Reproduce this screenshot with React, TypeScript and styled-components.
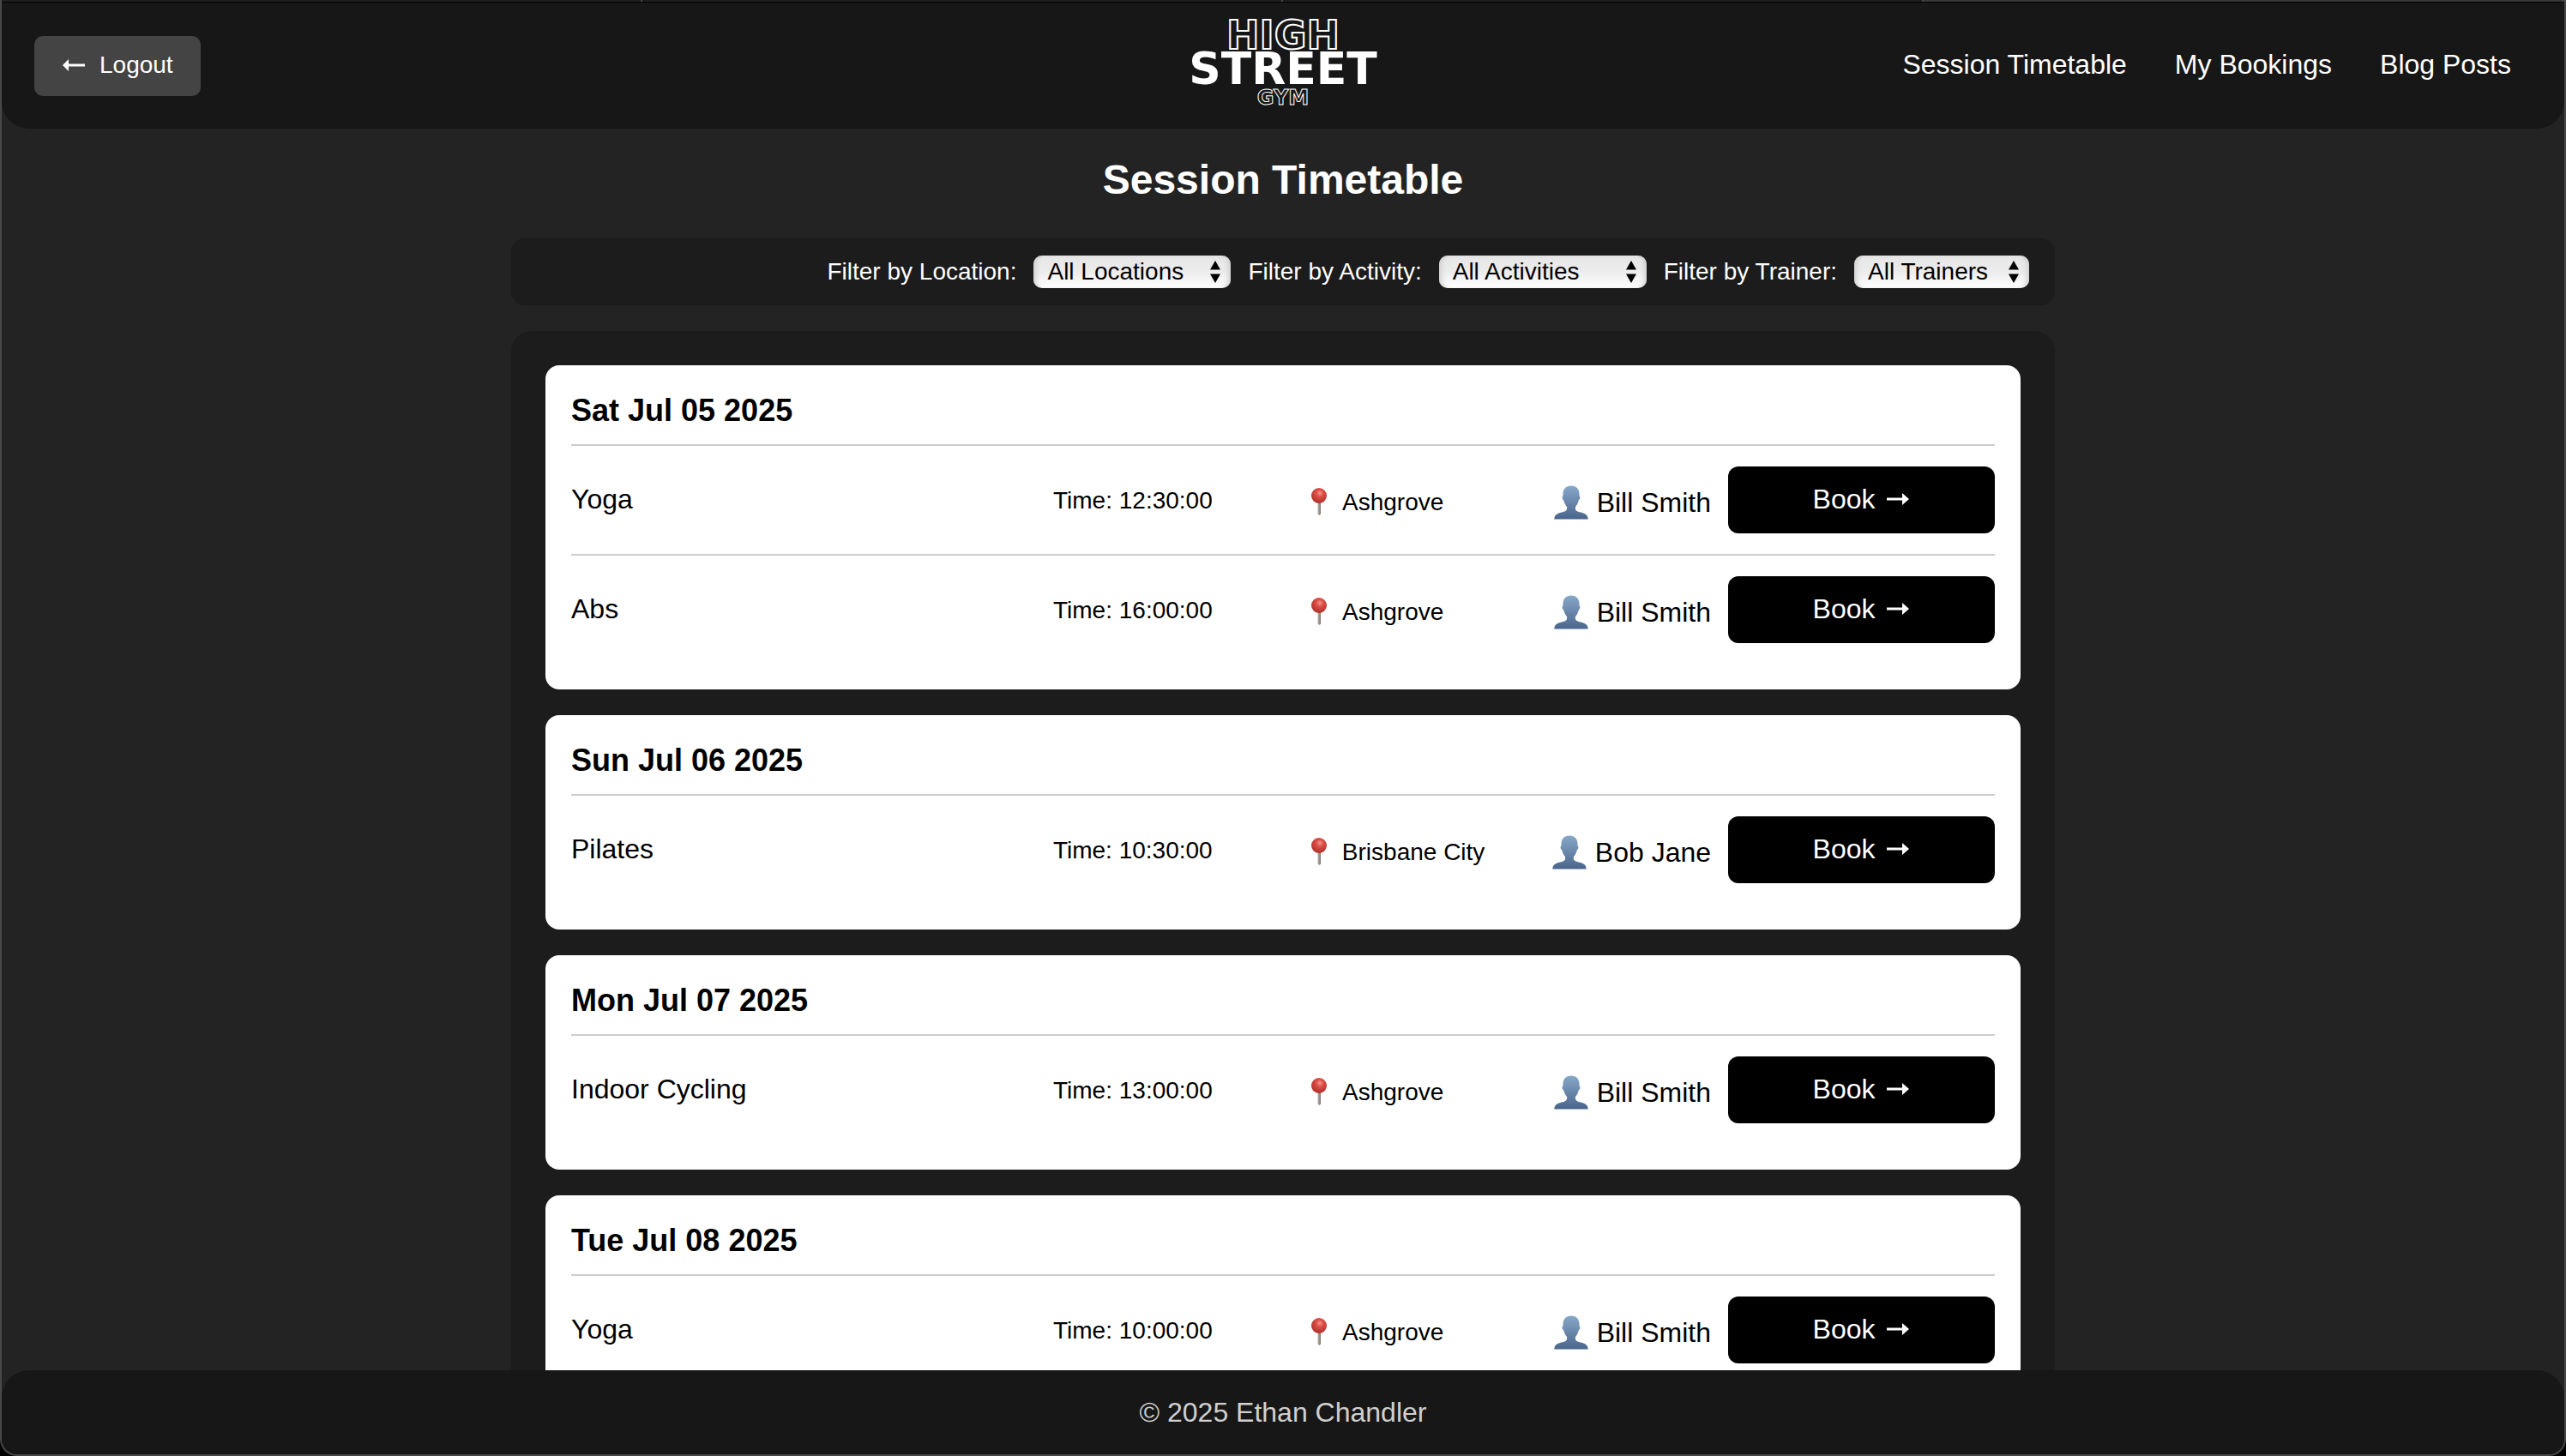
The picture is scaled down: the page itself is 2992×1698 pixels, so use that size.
import React from "react";
import styled, { createGlobalStyle } from "styled-components";

const GlobalStyle = createGlobalStyle`
  *, *::before, *::after { box-sizing: border-box; }
  body {
    margin: 0;
    background: #000;
    color: #fff;
    font-family: "Liberation Sans", Arial, Helvetica, sans-serif;
    font-size: 32px;
    line-height: 36px;
  }
  h1, h2, p, ul { margin: 0; padding: 0; }
  button, select { font-family: inherit; }
`;

const Window = styled.div`
  display: flex;
  flex-direction: column;
  height: 100vh;
  overflow: hidden;
  background: #232323;
  border: 2px solid #484848;
  border-top: 0;
  border-radius: 0 0 20px 20px;
`;

const TabStrip = styled.div`
  display: grid;
  grid-template-columns: 1fr 1fr 1fr 1fr;
  flex: none;
  height: 3px;
  border-bottom: 1px solid #000;
`;

const TabEdge = styled.span<{ $active?: boolean }>`
  border-right: 2px solid #484848;
  background: ${(p) => (p.$active ? "#383838" : "#1f1f1f")};
`;

const Header = styled.header`
  display: grid;
  grid-template-columns: 1fr auto 1fr;
  align-items: center;
  flex: none;
  height: 147px;
  padding: 0 38px;
  background: #171717;
  border-radius: 0 0 32px 32px;
`;

const LogoutButton = styled.button`
  display: flex;
  align-items: center;
  justify-self: start;
  gap: 16px;
  height: 70px;
  padding: 0 32px 2px;
  border: 0;
  border-radius: 10px;
  background: #444;
  color: #fff;
  font-size: 28px;
`;

const Logo = styled.a`
  display: flex;
  flex-direction: column;
  align-items: center;
  height: 106px;
  color: #fff;
  text-decoration: none;
  font-family: "DejaVu Sans", Verdana, sans-serif;
  font-weight: 700;
`;

const LogoLine = styled.span<{ $size: number; $height: number; $outline?: number }>`
  font-size: ${(p) => p.$size}px;
  line-height: ${(p) => p.$height}px;
  color: ${(p) => (p.$outline ? "#171717" : "#fff")};
  -webkit-text-stroke: ${(p) => p.$outline ?? 0}px #fff;
`;

const Nav = styled.nav`
  display: flex;
  justify-content: flex-end;
  gap: 56px;
  padding: 0 24px 4px 0;
`;

const NavLink = styled.a`
  color: #fff;
  text-decoration: none;
`;

const Main = styled.main`
  flex: 1;
  min-height: 0;
  overflow-y: auto;
  scrollbar-width: none;
  padding: 32px 40px;
`;

const Title = styled.h1`
  margin-bottom: 40px;
  font-size: 48px;
  line-height: 56px;
  text-align: center;
`;

const Column = styled.div`
  max-width: 1800px;
  margin: 0 auto;
`;

const FilterBar = styled.form`
  display: flex;
  justify-content: flex-end;
  align-items: center;
  gap: 20px;
  padding: 20px 30px;
  margin-bottom: 30px;
  border-radius: 16px;
  background: #1c1c1c;
  font-size: 28px;
`;

const SelectBox = styled.span<{ $width: number }>`
  display: grid;
  grid-template-columns: 1fr;
  align-items: center;
  width: ${(p) => p.$width}px;
  height: 38px;

  > * { grid-area: 1 / 1; }

  svg {
    justify-self: end;
    margin-right: 12px;
    pointer-events: none;
  }
`;

const Select = styled.select`
  appearance: none;
  width: 100%;
  height: 38px;
  padding: 0 36px 2px 16px;
  border: 0;
  border-radius: 10px;
  background: linear-gradient(#e6e6e6, #ececec 50%, #fff);
  box-shadow: inset 6px 0 6px -4px #c8c8c8, inset -6px 0 6px -4px #c8c8c8;
  color: #000;
  font-size: 28px;
`;

const Timetable = styled.section`
  display: flex;
  flex-direction: column;
  gap: 30px;
  padding: 40px;
  border-radius: 24px;
  background: #1c1c1c;
`;

const DayCard = styled.article`
  padding: 30px;
  border-radius: 16px;
  background: #fff;
  color: #000;
`;

const DayTitle = styled.h2`
  padding: 2px 0 18px;
  font-size: 36px;
  line-height: 42px;
`;

const SessionList = styled.ul`
  list-style: none;
`;

const SessionRow = styled.li`
  display: grid;
  grid-template-columns: 542fr 281fr 261fr 185fr 311fr;
  column-gap: 20px;
  align-items: center;
  padding: 24px 0;
  border-top: 2px solid #ccc;
`;

const Activity = styled.span`
  padding-bottom: 2px;
`;

const Time = styled.span`
  padding-top: 2px;
  font-size: 28px;
`;

const Place = styled.span`
  display: flex;
  align-items: center;
  gap: 18px;
  padding-top: 6px;
  font-size: 28px;
  white-space: nowrap;
`;

const Trainer = styled.span`
  display: flex;
  align-items: center;
  justify-content: flex-end;
  gap: 10px;
  padding-top: 6px;
  white-space: nowrap;
`;

const BookButton = styled.button`
  display: flex;
  align-items: center;
  justify-content: center;
  gap: 9px;
  height: 78px;
  padding: 0 0 2px;
  border: 0;
  border-radius: 12px;
  background: #000;
  color: #fff;
  font-size: 32px;
`;

const Footer = styled.footer`
  flex: none;
  padding: 31px;
  background: #171717;
  border-radius: 32px 32px 0 0;
  color: #d0d0d0;
  text-align: center;
`;

const LeftArrow = () => (
  <svg width="28" height="16" viewBox="0 0 28 16" aria-hidden="true">
    <path d="M1 8l7-7v5.500h19v3H8V15z" fill="#fff" />
  </svg>
);

const RightArrow = () => (
  <svg width="32" height="16" viewBox="0 0 32 16" aria-hidden="true">
    <path d="M31 8l-8-7v5.500H5v3h18V15z" fill="#fff" />
  </svg>
);

const PinIcon = () => (
  <svg width="18" height="34" viewBox="0 0 18 34" aria-hidden="true">
    <defs>
      <radialGradient id="pinHead" cx="0.55" cy="0.34" r="0.65">
        <stop offset="0" stopColor="#f3988e" />
        <stop offset="0.35" stopColor="#dd5048" />
        <stop offset="1" stopColor="#b02e2c" />
      </radialGradient>
      <linearGradient id="pinNeedle" x1="0" x2="1" y1="0" y2="0">
        <stop offset="0" stopColor="#b9b0ac" />
        <stop offset="1" stopColor="#7d7470" />
      </linearGradient>
    </defs>
    <path d="M7.500 16h3.500v14.500l-1.700 1.500l-1.800-1.500z" fill="url(#pinNeedle)" />
    <circle cx="9" cy="9" r="9" fill="url(#pinHead)" />
  </svg>
);

const PersonIcon = () => (
  <svg width="40" height="40" viewBox="0 0 40 40" aria-hidden="true">
    <defs>
      <linearGradient id="person" x1="0" x2="0" y1="0" y2="1">
        <stop offset="0" stopColor="#87a8c8" />
        <stop offset="1" stopColor="#4a658c" />
      </linearGradient>
    </defs>
    <path
      d="M20 0.500c6 0 9.500 4 9.500 9.500v2.500c1.500 0.500 1 4-0.800 5c-0.700 3.500-2 5.500-3.700 7.500c-0.500 3.500 0.500 5 4 6c6 1.200 10.500 2.500 10.700 8.500H0.300c0.200-6 4.700-7.300 10.700-8.500c3.500-1 4.500-2.500 4-6c-1.700-2-3-4-3.700-7.500c-1.800-1-2.300-4.500-0.800-5V10C10.500 4.500 14 0.500 20 0.500z"
      fill="url(#person)"
    />
  </svg>
);

const SelectArrows = () => (
  <svg width="12" height="26" viewBox="0 0 12 26" aria-hidden="true">
    <path d="M6 0l6 10.500H0zM6 26l6-10.500H0z" fill="#000" />
  </svg>
);

const filters = [
  { id: "location", label: "Filter by Location:", option: "All Locations", width: 230 },
  { id: "activity", label: "Filter by Activity:", option: "All Activities", width: 242 },
  { id: "trainer", label: "Filter by Trainer:", option: "All Trainers", width: 204 },
];

const days = [
  {
    date: "Sat Jul 05 2025",
    sessions: [
      { activity: "Yoga", time: "12:30:00", place: "Ashgrove", trainer: "Bill Smith" },
      { activity: "Abs", time: "16:00:00", place: "Ashgrove", trainer: "Bill Smith" },
    ],
  },
  {
    date: "Sun Jul 06 2025",
    sessions: [{ activity: "Pilates", time: "10:30:00", place: "Brisbane City", trainer: "Bob Jane" }],
  },
  {
    date: "Mon Jul 07 2025",
    sessions: [{ activity: "Indoor Cycling", time: "13:00:00", place: "Ashgrove", trainer: "Bill Smith" }],
  },
  {
    date: "Tue Jul 08 2025",
    sessions: [{ activity: "Yoga", time: "10:00:00", place: "Ashgrove", trainer: "Bill Smith" }],
  },
];

export default function App() {
  return (
    <>
      <GlobalStyle />
      <Window>
        <TabStrip aria-hidden="true">
          <TabEdge />
          <TabEdge />
          <TabEdge />
          <TabEdge $active />
        </TabStrip>
        <Header>
          <LogoutButton type="button">
            <LeftArrow />
            Logout
          </LogoutButton>
          <Logo href="#">
            <LogoLine $size={46} $height={34} $outline={2}>HIGH</LogoLine>
            <LogoLine $size={52} $height={45}>STREET</LogoLine>
            <LogoLine $size={24} $height={22} $outline={1}>GYM</LogoLine>
          </Logo>
          <Nav>
            <NavLink href="#">Session Timetable</NavLink>
            <NavLink href="#">My Bookings</NavLink>
            <NavLink href="#">Blog Posts</NavLink>
          </Nav>
        </Header>
        <Main>
          <Title>Session Timetable</Title>
          <Column>
            <FilterBar>
              {filters.map((f) => (
                <React.Fragment key={f.id}>
                  <label htmlFor={f.id}>{f.label}</label>
                  <SelectBox $width={f.width}>
                    <Select id={f.id}>
                      <option>{f.option}</option>
                    </Select>
                    <SelectArrows />
                  </SelectBox>
                </React.Fragment>
              ))}
            </FilterBar>
            <Timetable>
              {days.map((day) => (
                <DayCard key={day.date}>
                  <DayTitle>{day.date}</DayTitle>
                  <SessionList>
                    {day.sessions.map((s) => (
                      <SessionRow key={s.time}>
                        <Activity>{s.activity}</Activity>
                        <Time>Time: {s.time}</Time>
                        <Place>
                          <PinIcon />
                          {s.place}
                        </Place>
                        <Trainer>
                          <PersonIcon />
                          {s.trainer}
                        </Trainer>
                        <BookButton type="button">
                          Book
                          <RightArrow />
                        </BookButton>
                      </SessionRow>
                    ))}
                  </SessionList>
                </DayCard>
              ))}
            </Timetable>
          </Column>
        </Main>
        <Footer>© 2025 Ethan Chandler</Footer>
      </Window>
    </>
  );
}
